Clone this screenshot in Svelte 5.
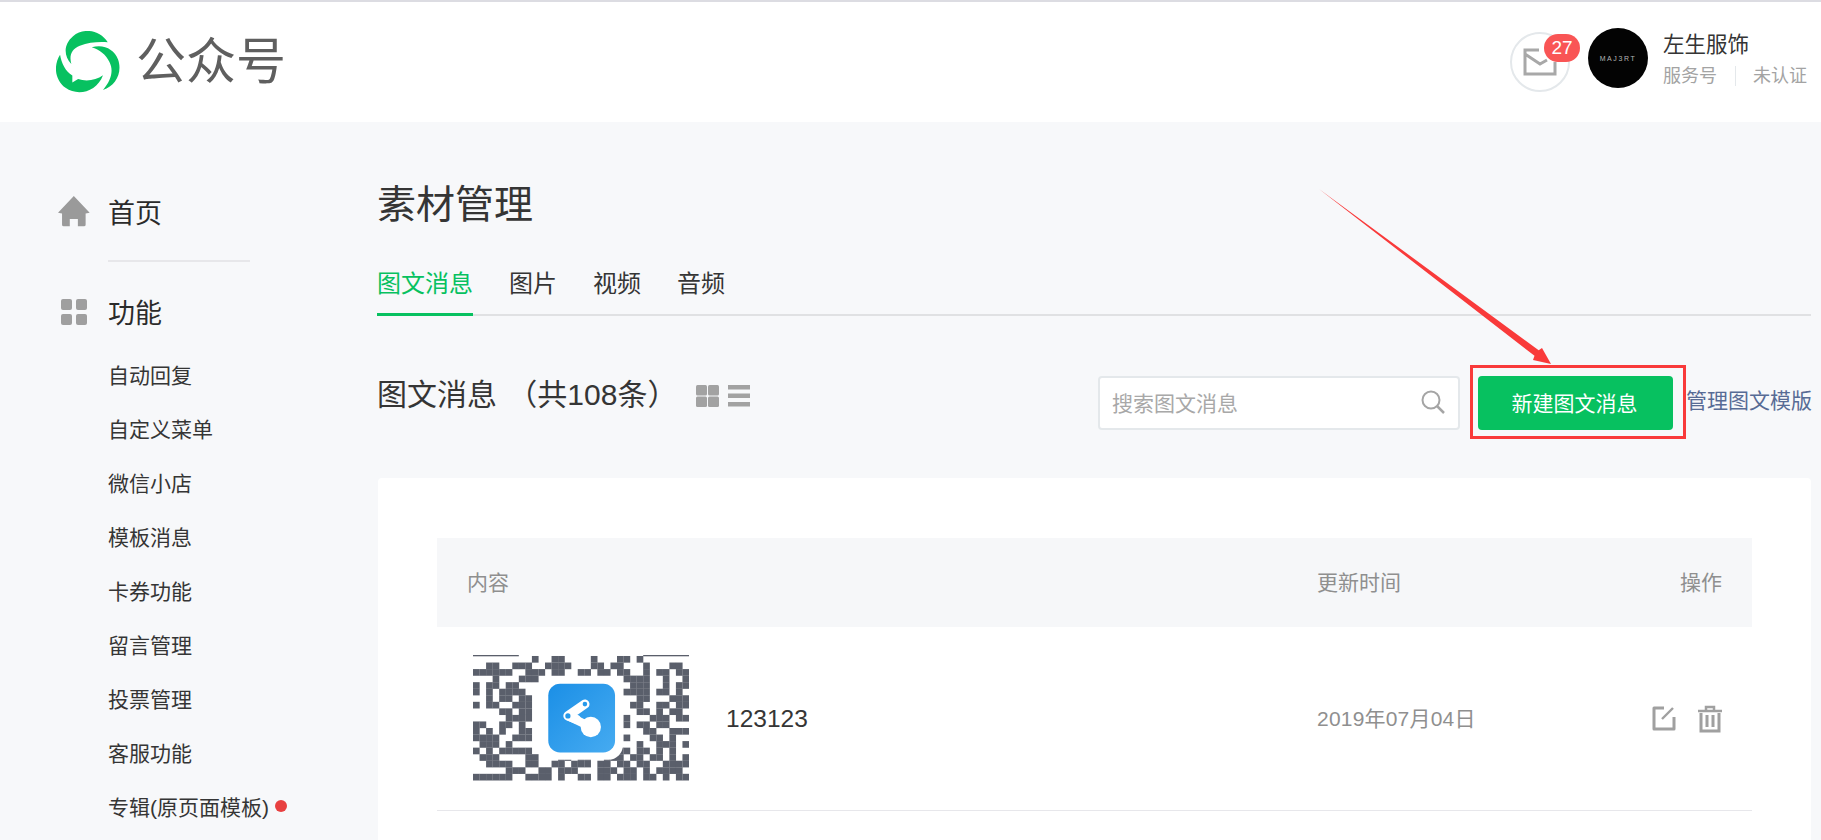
<script lang="ts">
    const menu = ['自动回复', '自定义菜单', '微信小店', '模板消息', '卡券功能', '留言管理', '投票管理', '客服功能'];
    const tabs = ['图文消息', '图片', '视频', '音频'];

    // qr modules, the middle gets covered by the app logo
    const QR = [
        '000000000100110000100011010000000',
        '001100111001111000110110001000110',
        '111111001110110011011011001011011',
        '000100011100000000000001111001001',
        '101101100000000000000000111001011',
        '101011110000000000000001111011010',
        '001011011000000000000000011000111',
        '101100111000000000000000110011011',
        '000011011000000000000000011010110',
        '000001111000000000000001000111011',
        '110011010000000000000001011011000',
        '101010011000000000000000001100111',
        '111100111000000000000001000110100',
        '011101000000000000000000010011101',
        '101011111000000000000011011010100',
        '011100001100011011001110110110101',
        '001111001100110111011011011001111',
        '000001110011011100011101101011110',
        '111111001111010011011011101101011',
    ];
    const cells: { x: number; y: number }[] = [];
    QR.forEach((row, y) => {
        [...row].forEach((c, x) => {
            if (c === '1') cells.push({ x, y });
        });
    });
</script>

<div class="page">
    <header class="topbar">
        <div class="brand">
            <svg class="logo" viewBox="170 95 188 182">
                <path d="M322 128C300 92 250 84 220 110C192 134 192 168 215 192C208 165 216 148 240 138C266 128 296 126 322 128Z" />
                <path d="M275 143C310 132 342 150 352 178C366 216 346 256 308 268C332 240 340 212 327 186C316 164 298 150 275 143Z" />
                <path d="M182 165C162 196 166 238 198 262C234 288 290 274 308 225C288 240 258 244 235 236L218 246L218 226C198 214 186 190 182 165Z" />
            </svg>
            <span class="brand-name">公众号</span>
        </div>
        <div class="account">
            <div class="mail">
                <svg viewBox="0 0 34 28" width="34" height="28">
                    <path d="M32 14V26H2V2H16M2 6L17 16L24 12" fill="none" stroke="#a8a8a8" stroke-width="3" />
                </svg>
                <span class="badge">27</span>
            </div>
            <div class="avatar"><span>MAJ3RT</span></div>
            <div class="account-info">
                <div class="account-name">左生服饰</div>
                <div class="account-meta">
                    <span>服务号</span>
                    <i></i>
                    <span>未认证</span>
                </div>
            </div>
        </div>
    </header>

    <div class="layout">
        <aside class="sidebar">
            <div class="nav-head">
                <svg class="nav-icon home" viewBox="53 47 95 92" width="32" height="31">
                    <path d="M100 47L147 97L135 99V132Q135 137 130 137H112V115H88V137H70Q65 137 65 132V99L53 97Z" fill="#9a9a9a" />
                </svg>
                <span>首页</span>
            </div>
            <div class="nav-rule"></div>
            <div class="nav-head second">
                <svg class="nav-icon" viewBox="0 0 26 26" width="26" height="26">
                    <rect x="0" y="0" width="11" height="11" rx="2" fill="#9f9f9f" />
                    <rect x="15" y="0" width="11" height="11" rx="2" fill="#9f9f9f" />
                    <rect x="0" y="15" width="11" height="11" rx="2" fill="#9f9f9f" />
                    <rect x="15" y="15" width="11" height="11" rx="2" fill="#9f9f9f" />
                </svg>
                <span>功能</span>
            </div>
            <ul class="nav-list">
                {#each menu as item}
                    <li>{item}</li>
                {/each}
                <li>专辑(原页面模板)<b class="dot"></b></li>
            </ul>
        </aside>

        <main class="main">
            <h1>素材管理</h1>
            <nav class="tabs">
                {#each tabs as tab, i}
                    <span class="tab" class:active={i === 0}>{tab}</span>
                {/each}
            </nav>

            <div class="toolbar">
                <div class="list-title">图文消息 <span class="count">（共108条）</span></div>
                <div class="views">
                    <svg viewBox="0 0 23 22" width="23" height="22">
                        <rect x="0" y="0" width="11" height="10.5" rx="1.5" fill="#a2a2a2" />
                        <rect x="12" y="0" width="11" height="10.5" rx="1.5" fill="#a2a2a2" />
                        <rect x="0" y="11.5" width="11" height="10.5" rx="1.5" fill="#a2a2a2" />
                        <rect x="12" y="11.5" width="11" height="10.5" rx="1.5" fill="#a2a2a2" />
                    </svg>
                    <svg viewBox="0 0 22 22" width="22" height="22">
                        <rect x="0" y="0" width="22" height="4.5" fill="#a2a2a2" />
                        <rect x="0" y="8.5" width="22" height="4.5" fill="#a2a2a2" />
                        <rect x="0" y="17" width="22" height="4.5" fill="#a2a2a2" />
                    </svg>
                </div>
                <div class="search">
                    <span>搜索图文消息</span>
                    <svg viewBox="0 0 24 24" width="24" height="24">
                        <circle cx="10" cy="10" r="8.5" fill="none" stroke="#a5a5a5" stroke-width="2" />
                        <path d="M16 16L23 23" stroke="#a5a5a5" stroke-width="2.5" />
                    </svg>
                </div>
                <button class="create">新建图文消息</button>
                <span class="manage">管理图文模版</span>
            </div>

            <section class="card">
                <div class="table-head">
                    <span>内容</span>
                    <span>更新时间</span>
                    <span class="op">操作</span>
                </div>
                <div class="row">
                    <div class="row-main">
                        <svg class="thumb" viewBox="0 -1 33 19.4" width="216" height="127" preserveAspectRatio="none">
                            <defs>
                                <linearGradient id="appblue" x1="0" y1="0" x2="1" y2="1">
                                    <stop offset="0" stop-color="#1b8fe6" />
                                    <stop offset="1" stop-color="#46abf1" />
                                </linearGradient>
                            </defs>
                            <rect x="0" y="-1" width="7" height="0.2" fill="#5a5f6b" />
                            <rect x="26" y="-1" width="7" height="0.2" fill="#5a5f6b" />
                            {#each cells as c}
                                <rect x={c.x} y={c.y - 0.85} width="1.02" height="1.02" fill="#5a5f6b" />
                            {/each}
                            <rect x="10.2" y="2.4" width="12.7" height="12.6" rx="2.2" fill="#fff" />
                            <rect x="11.5" y="3.4" width="10.2" height="10.5" rx="1.8" fill="url(#appblue)" />
                            <circle cx="18" cy="10" r="1.55" fill="#fff" />
                            <path d="M15.8 8.8L14.5 8.3L17.1 6.5" fill="none" stroke="#fff" stroke-width="1.4" stroke-linecap="round" stroke-linejoin="round" />
                            <path d="M14.5 8.3L18 10" stroke="#fff" stroke-width="1.3" />
                            <circle cx="14.5" cy="8.3" r="0.4" fill="#2699ea" />
                            <circle cx="17.1" cy="6.5" r="0.35" fill="#2699ea" />
                        </svg>
                        <span class="row-title">123123</span>
                    </div>
                    <span class="row-date">2019年07月04日</span>
                    <div class="row-ops">
                        <svg viewBox="0 0 24 25" width="24" height="25">
                            <path d="M12 2H2V23H22V11" fill="none" stroke="#a0a0a0" stroke-width="3" stroke-linejoin="round" />
                            <path d="M10 13L21 2" stroke="#a0a0a0" stroke-width="2.4" />
                        </svg>
                        <svg viewBox="0 0 24 28" width="24" height="28">
                            <path d="M0 6H24M8 5V2H16V5" fill="none" stroke="#a0a0a0" stroke-width="2.5" />
                            <path d="M3 8V26H21V8" fill="none" stroke="#a0a0a0" stroke-width="3" />
                            <path d="M9 10V22M15 10V22" stroke="#a0a0a0" stroke-width="3" />
                        </svg>
                    </div>
                </div>
            </section>
        </main>
    </div>

    <!-- annotation drawn over the screenshot -->
    <div class="mark-box"></div>
    <svg class="mark-arrow" viewBox="0 0 1821 840" width="1821" height="840">
        <polygon points="1319,189 1538.7,350.2 1542,348 1551,364 1533,360 1534.5,355.8" fill="#f93a3a" />
    </svg>
</div>

<style>
    :global(body) {
        margin: 0;
        overflow: hidden;
    }

    .page {
        position: relative;
        height: 840px;
        overflow: hidden;
        background: #f7f8fa;
        color: #353535;
        font-family: "Liberation Sans", "Noto Sans CJK SC", sans-serif;
    }

    .topbar {
        display: flex;
        align-items: center;
        justify-content: space-between;
        height: 120px;
        padding: 0 14px 0 56px;
        border-top: 2px solid #dcdce2;
        background: #fff;
    }

    .brand {
        display: flex;
        align-items: center;
        gap: 16px;
    }

    .logo {
        width: 64px;
        height: 62px;
        fill: #07c160;
    }

    .brand-name {
        font-size: 50px;
        line-height: 60px;
        color: #5f5f5f;
    }

    .account {
        display: flex;
        align-items: center;
    }

    .mail {
        position: relative;
        display: flex;
        align-items: center;
        justify-content: center;
        box-sizing: border-box;
        width: 60px;
        height: 60px;
        margin: 0 18px 0 0;
        border: 2px solid #e4e8eb;
        border-radius: 50%;
    }

    .badge {
        position: absolute;
        top: 0;
        left: 32px;
        width: 36px;
        height: 28px;
        border-radius: 14px;
        background: #f95555;
        color: #fff;
        font-size: 19px;
        line-height: 28px;
        text-align: center;
    }

    .avatar {
        display: flex;
        align-items: center;
        justify-content: center;
        width: 60px;
        height: 60px;
        margin: -8px 15px 0 0;
        border-radius: 50%;
        background: #030303;
    }

    .avatar span {
        color: #b4b4b4;
        font-family: "Liberation Sans", sans-serif;
        font-size: 7px;
        letter-spacing: 1.6px;
    }

    .account-info {
        margin-top: -6px;
    }

    .account-name {
        font-size: 21.5px;
        line-height: 30px;
    }

    .account-meta {
        display: flex;
        align-items: center;
        margin-top: 4px;
        color: #a3a3a3;
        font-size: 18px;
        line-height: 24px;
    }

    .account-meta i {
        width: 1px;
        height: 20px;
        margin: 0 17px 0 18px;
        background: #e4e8eb;
    }

    .layout {
        display: flex;
    }

    .sidebar {
        flex: none;
        box-sizing: border-box;
        width: 377px;
        padding: 66px 0 0 58px;
    }

    .nav-head {
        display: flex;
        align-items: center;
        height: 50px;
        font-size: 27px;
        color: #2b2b2b;
    }

    .nav-head span {
        margin: -4px 0 0 18px;
    }

    .nav-head.second {
        margin-top: 26px;
    }

    .nav-head.second span {
        margin-left: 21px;
    }

    .nav-head.second .nav-icon {
        margin: -3px 0 0 3px;
    }

    .nav-icon.home {
        margin-top: -4px;
    }

    .nav-rule {
        width: 142px;
        height: 2px;
        margin: 22px 0 0 50px;
        background: #e7e7ea;
    }

    .nav-list {
        margin: 9px 0 0 50px;
        padding: 0;
        list-style: none;
    }

    .nav-list li {
        display: flex;
        align-items: center;
        height: 54px;
        font-size: 21px;
        color: #353535;
    }

    .dot {
        width: 12px;
        height: 12px;
        margin-left: 6px;
        border-radius: 50%;
        background: #e84040;
    }

    .main {
        flex: 1;
        min-width: 0;
        padding: 58px 10px 0 0;
    }

    h1 {
        margin: 0;
        font-size: 39px;
        font-weight: 400;
        line-height: 50px;
        color: #353535;
    }

    .tabs {
        display: flex;
        gap: 36px;
        height: 64px;
        margin-top: 20px;
        border-bottom: 2px solid #e0e1e3;
    }

    .tab {
        height: 64px;
        font-size: 24px;
        line-height: 68px;
        color: #353535;
    }

    .tab.active {
        height: 63px;
        border-bottom: 3px solid #07c160;
        color: #07c160;
    }

    .toolbar {
        display: flex;
        align-items: flex-start;
        margin-top: 60px;
    }

    .list-title {
        font-size: 30px;
        line-height: 38px;
        white-space: pre;
    }

    .count {
        margin-left: 2px;
    }

    .views {
        display: flex;
        gap: 9px;
        margin: 9px 0 0 19px;
    }

    .search {
        display: flex;
        align-items: center;
        justify-content: space-between;
        box-sizing: border-box;
        width: 362px;
        height: 54px;
        margin-left: auto;
        padding: 0 13px 2px 12px;
        border: 2px solid #e4e8eb;
        border-radius: 4px;
        background: #fff;
        color: #a8a8a8;
        font-size: 21px;
    }

    .create {
        width: 195px;
        height: 54px;
        margin: 0 13px 0 18px;
        padding: 0 2px 3px 0;
        border: 0;
        border-radius: 4px;
        background: #07c160;
        color: #fff;
        font: inherit;
        font-size: 21px;
    }

    .manage {
        flex: none;
        width: 126px;
        margin-right: -1px;
        color: #576b95;
        font-size: 21px;
        line-height: 50px;
        white-space: nowrap;
    }

    .card {
        height: 400px;
        margin: 48px 0 0 1px;
        padding: 60px 59px 0;
        border-radius: 4px;
        background: #fff;
    }

    .table-head {
        display: grid;
        grid-template-columns: 850px 1fr auto;
        align-items: center;
        box-sizing: border-box;
        height: 89px;
        padding: 0 30px 4px 30px;
        background: #f6f7f9;
        color: #8f8f8f;
        font-size: 21px;
    }

    .row {
        display: grid;
        grid-template-columns: 880px 1fr auto;
        align-items: center;
        height: 183px;
        padding: 0 30px 0 0;
        border-bottom: 1px solid #e7e7eb;
    }

    .row-main {
        display: flex;
        align-items: center;
        gap: 37px;
        padding-left: 36px;
    }

    .row-title {
        font-size: 24.5px;
        color: #353535;
    }

    .row-date {
        margin-top: -3px;
        color: #8f8f8f;
        font-size: 21px;
        letter-spacing: 0.2px;
    }

    .row-ops {
        display: flex;
        align-items: center;
        gap: 22px;
    }

    .mark-box {
        position: absolute;
        top: 365px;
        left: 1470px;
        box-sizing: border-box;
        width: 216px;
        height: 74px;
        border: 3px solid #f93a3a;
    }

    .mark-arrow {
        position: absolute;
        top: 0;
        left: 0;
    }
</style>
